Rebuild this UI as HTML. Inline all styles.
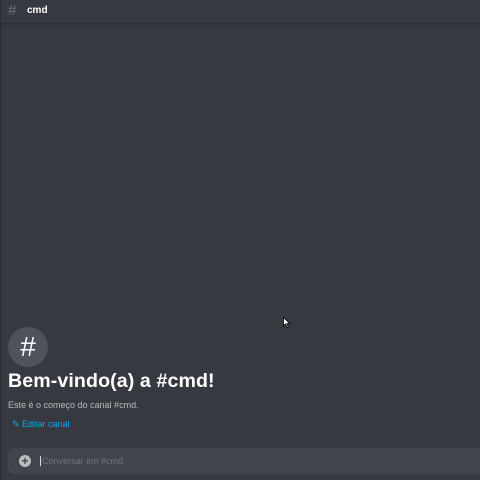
<!DOCTYPE html>
<html><head><style>
body{margin:0;width:480px;height:480px;background:#36393f;font-family:"Liberation Sans",sans-serif;overflow:hidden;position:relative}
.hdr{position:absolute;left:0;top:0;width:480px;height:23px;border-bottom:1px solid #2c2e33;box-shadow:0 1px 1px rgba(0,0,0,.15)}
.hdr .h{position:absolute;left:8px;top:2px;color:#72767d;font-size:15px}
.hdr .t{position:absolute;left:27px;top:5px;color:#fff;font-weight:bold;font-size:10px}
.lb{position:absolute;left:0;top:0;width:1px;height:480px;background:#2a2c30}
.av{position:absolute;left:8px;top:327px;width:40px;height:40px;border-radius:50%;background:#4f545c;color:#fff;font-size:28px;text-align:center;line-height:40px}
.ttl{position:absolute;left:8px;top:370px;color:#fff;font-weight:bold;font-size:19.6px;letter-spacing:0.1px}
.sub{position:absolute;left:8px;top:400px;color:#b9bbbe;font-size:9px}
.ed{position:absolute;left:12px;top:419px;color:#00aff4;font-size:9px}
.inp{position:absolute;left:8px;top:448px;width:480px;height:26px;border-radius:6px;background:#40444b}
.pl{position:absolute;left:11px;top:7px;width:12px;height:12px;border-radius:50%;background:#b9bbbe;color:#40444b;font-size:12px;line-height:12px;text-align:center;font-weight:bold}
.ph{position:absolute;left:32px;top:8px;color:#72767d;font-size:9px;border-left:1px solid #dcddde;padding-left:1px}
</style></head><body>
<div class="lb"></div>
<div class="hdr"><span class="h">#</span><span class="t">cmd</span></div>
<div class="av">#</div>
<div class="ttl">Bem-vindo(a) a #cmd!</div>
<div class="sub">Este é o começo do canal #cmd.</div>
<div class="ed">✎ Editar canal</div>
<div class="inp"><div class="pl">+</div><div class="ph">Conversar em #cmd</div></div>
<svg style="position:absolute;left:283px;top:317px" width="8" height="12" viewBox="0 0 8 12"><path d="M0.5 0.5 L0.5 9 L2.5 7 L4 10.5 L5.3 10 L3.8 6.6 L6.8 6.6 Z" fill="#fff" stroke="#000" stroke-width="0.8"/></svg>
</body></html>
